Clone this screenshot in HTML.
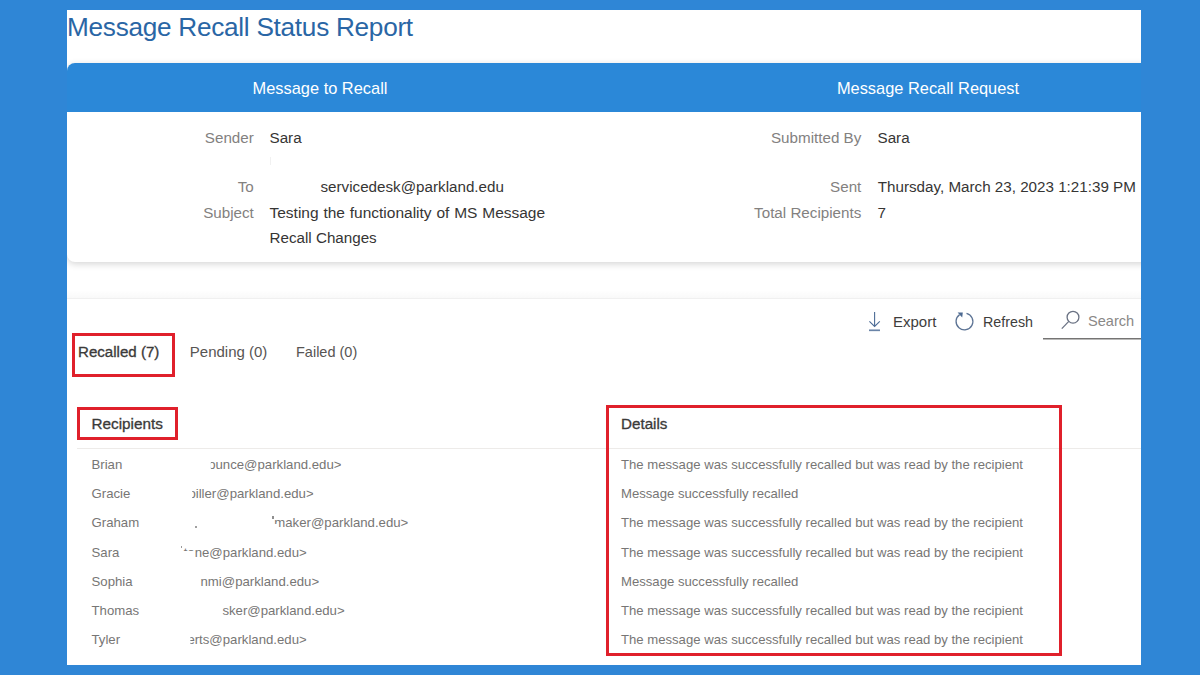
<!DOCTYPE html>
<html><head><meta charset="utf-8"><style>
html,body{margin:0;padding:0;}
body{width:1200px;height:675px;background:#2F86D6;position:relative;overflow:hidden;font-family:"Liberation Sans",sans-serif;}
.panel{position:absolute;left:67px;top:10px;width:1074px;height:655px;background:#fff;overflow:hidden;}
.layer{position:absolute;left:0;top:0;width:1200px;height:675px;}
.t{position:absolute;white-space:nowrap;line-height:1;}
.card{position:absolute;left:67px;top:63px;width:1200px;height:199px;background:#fff;border-radius:8px;box-shadow:0 2px 7px rgba(0,0,0,0.17);overflow:hidden;}
.hdr{position:absolute;left:0;top:0;width:100%;height:49px;background:#2B88D8;}
.rbox{position:absolute;border:3px solid #E0202B;box-sizing:border-box;}
.line{position:absolute;height:1px;background:#EDEBE9;}
</style></head><body>
<div class="panel"></div>
<div class="layer" style="clip-path:inset(10px 59px 10px 67px);">
<div class="card"><div class="hdr"></div></div>
<div style="position:absolute;left:67px;top:290px;width:1075px;height:8px;background:linear-gradient(to bottom,rgba(0,0,0,0),rgba(0,0,0,0.025));"></div><div class="line" style="left:67px;top:298px;width:1075px;background:#F0F0F0;"></div>
<div class="line" style="left:77px;top:448px;width:1065px;"></div>
<svg style="position:absolute;left:0;top:0" width="1200" height="675">
 <g fill="none" stroke="#4D6C96" stroke-width="1.1">
  <path d="M874.6 312 V326.5 M869.4 321.3 L874.6 326.5 L879.8 321.3"/>
  <path d="M869 330.3 H880" stroke-width="1.7" stroke="#6A84A8"/>
  <path d="M966.5 313.3 A8.4 8.4 0 1 1 959.6 314.6" stroke="#5D7495" stroke-width="1.3"/>
 </g>
 <path d="M957.6 312.4 L962.8 312.4 L962.2 317.6 Z" fill="#4D6A92"/>
 <g fill="none" stroke="#6A7283" stroke-width="1.3">
  <circle cx="1073" cy="317.2" r="5.9"/>
  <path d="M1068.8 321.4 L1061.8 328.6"/>
 </g>
 <path d="M1043 338.8 H1141" stroke="#757473" stroke-width="1.5"/>
</svg>
<div class="rbox" style="left:71.5px;top:333px;width:103px;height:43.5px;"></div>
<div class="rbox" style="left:77px;top:407px;width:101px;height:32.5px;"></div>
<div class="rbox" style="left:606px;top:405px;width:456px;height:250.6px;"></div>
<div class="t" style="left:67.00px;top:14.22px;font-size:26.2px;color:#2A66A5;font-weight:400;letter-spacing:-0.28px;">Message Recall Status Report</div>
<div class="t" style="left:20.00px;width:600px;text-align:center;top:80.42px;font-size:16.4px;color:#FFFFFF;font-weight:400;">Message to Recall</div>
<div class="t" style="left:628.00px;width:600px;text-align:center;top:80.42px;font-size:16.4px;color:#FFFFFF;font-weight:400;">Message Recall Request</div>
<div class="t" style="right:946.20px;top:129.83px;font-size:15.2px;color:#83817F;font-weight:400;">Sender</div>
<div class="t" style="right:946.20px;top:179.23px;font-size:15.2px;color:#83817F;font-weight:400;">To</div>
<div class="t" style="right:946.20px;top:205.23px;font-size:15.2px;color:#83817F;font-weight:400;">Subject</div>
<div class="t" style="right:338.70px;top:129.83px;font-size:15.2px;color:#83817F;font-weight:400;">Submitted By</div>
<div class="t" style="right:338.70px;top:179.23px;font-size:15.2px;color:#83817F;font-weight:400;">Sent</div>
<div class="t" style="right:338.70px;top:205.23px;font-size:15.2px;color:#83817F;font-weight:400;">Total Recipients</div>
<div class="t" style="left:269.50px;top:129.83px;font-size:15.2px;color:#363534;font-weight:400;">Sara</div>
<div class="t" style="left:320.50px;top:179.23px;font-size:15.2px;color:#363534;font-weight:400;">servicedesk@parkland.edu</div>
<div class="t" style="left:269.50px;top:204.98px;font-size:15.5px;color:#363534;font-weight:400;word-spacing:0.5px;">Testing the functionality of MS Message</div>
<div class="t" style="left:269.50px;top:229.63px;font-size:15.2px;color:#363534;font-weight:400;">Recall Changes</div>
<div class="t" style="left:877.50px;top:129.83px;font-size:15.2px;color:#363534;font-weight:400;">Sara</div>
<div class="t" style="left:877.80px;top:179.23px;font-size:15.2px;color:#363534;font-weight:400;">Thursday, March 23, 2023 1:21:39 PM</div>
<div class="t" style="left:877.50px;top:205.23px;font-size:15.2px;color:#363534;font-weight:400;">7</div>
<div class="t" style="left:893.00px;top:313.90px;font-size:15.0px;color:#3E3D3C;font-weight:400;">Export</div>
<div class="t" style="left:983.00px;top:315.30px;font-size:14.3px;color:#3E3D3C;font-weight:400;">Refresh</div>
<div class="t" style="left:1088.00px;top:314.24px;font-size:14.6px;color:#8A8886;font-weight:400;">Search</div>
<div class="t" style="left:78.00px;top:344.22px;font-size:15.1px;color:#3B3A39;font-weight:400;-webkit-text-stroke:0.32px #3B3A39;">Recalled (7)</div>
<div class="t" style="left:189.80px;top:343.90px;font-size:15.0px;color:#575553;font-weight:400;">Pending (0)</div>
<div class="t" style="left:296.00px;top:344.73px;font-size:14.5px;color:#575553;font-weight:400;">Failed (0)</div>
<div class="t" style="left:91.50px;top:415.85px;font-size:15.3px;color:#3B3A39;font-weight:400;-webkit-text-stroke:0.32px #3B3A39;">Recipients</div>
<div class="t" style="left:621.00px;top:415.93px;font-size:15.2px;color:#3B3A39;font-weight:400;-webkit-text-stroke:0.32px #3B3A39;">Details</div>
<div class="t" style="left:91.50px;top:458.03px;font-size:13.2px;color:#777675;font-weight:400;">Brian</div>
<div class="t" style="left:208.20px;top:458.03px;font-size:13.2px;color:#777675;font-weight:400;clip-path:inset(0 0 0 2.6px);">ounce@parkland.edu&gt;</div>
<div class="t" style="left:621.00px;top:458.09px;font-size:13.13px;color:#777675;font-weight:400;">The message was successfully recalled but was read by the recipient</div>
<div class="t" style="left:91.50px;top:487.23px;font-size:13.2px;color:#777675;font-weight:400;">Gracie</div>
<div class="t" style="left:188.40px;top:487.23px;font-size:13.2px;color:#777675;font-weight:400;clip-path:inset(0 0 0 3.8px);">oiller@parkland.edu&gt;</div>
<div class="t" style="left:621.00px;top:487.29px;font-size:13.13px;color:#777675;font-weight:400;">Message successfully recalled</div>
<div class="t" style="left:91.50px;top:516.43px;font-size:13.2px;color:#777675;font-weight:400;">Graham</div>
<div class="t" style="left:274.30px;top:516.43px;font-size:13.2px;color:#777675;font-weight:400;">maker@parkland.edu&gt;</div>
<div class="t" style="left:621.00px;top:516.49px;font-size:13.13px;color:#777675;font-weight:400;">The message was successfully recalled but was read by the recipient</div>
<div class="t" style="left:91.50px;top:545.63px;font-size:13.2px;color:#777675;font-weight:400;">Sara</div>
<div class="t" style="left:183.70px;top:545.63px;font-size:13.2px;color:#777675;font-weight:400;">tone@parkland.edu&gt;</div>
<div class="t" style="left:621.00px;top:545.69px;font-size:13.13px;color:#777675;font-weight:400;">The message was successfully recalled but was read by the recipient</div>
<div class="t" style="left:91.50px;top:574.83px;font-size:13.2px;color:#777675;font-weight:400;">Sophia</div>
<div class="t" style="left:200.50px;top:574.83px;font-size:13.2px;color:#777675;font-weight:400;">nmi@parkland.edu&gt;</div>
<div class="t" style="left:621.00px;top:574.89px;font-size:13.13px;color:#777675;font-weight:400;">Message successfully recalled</div>
<div class="t" style="left:91.50px;top:604.03px;font-size:13.2px;color:#777675;font-weight:400;">Thomas</div>
<div class="t" style="left:222.40px;top:604.03px;font-size:13.2px;color:#777675;font-weight:400;">sker@parkland.edu&gt;</div>
<div class="t" style="left:621.00px;top:604.09px;font-size:13.13px;color:#777675;font-weight:400;">The message was successfully recalled but was read by the recipient</div>
<div class="t" style="left:91.50px;top:633.23px;font-size:13.2px;color:#777675;font-weight:400;">Tyler</div>
<div class="t" style="left:187.40px;top:633.23px;font-size:13.2px;color:#777675;font-weight:400;clip-path:inset(0 0 0 3.0px);">erts@parkland.edu&gt;</div>
<div class="t" style="left:621.00px;top:633.29px;font-size:13.13px;color:#777675;font-weight:400;">The message was successfully recalled but was read by the recipient</div>
<div style="position:absolute;left:180px;top:550.6px;width:14.5px;height:8px;background:#fff;"></div>
<div style="position:absolute;left:180.5px;top:546px;width:1.6px;height:2.2px;background:#9a9a9a;"></div>
<div style="position:absolute;left:272px;top:516px;width:1.5px;height:3px;background:#8f8f8f;"></div>
<div style="position:absolute;left:273px;top:524px;width:4px;height:6px;background:#fff;"></div>
<div style="position:absolute;left:195px;top:525.5px;width:1.6px;height:2px;background:#a0a0a0;"></div>
<div style="position:absolute;left:270px;top:157px;width:1.2px;height:8px;background:#f1f1f1;"></div>

</div>
</body></html>
